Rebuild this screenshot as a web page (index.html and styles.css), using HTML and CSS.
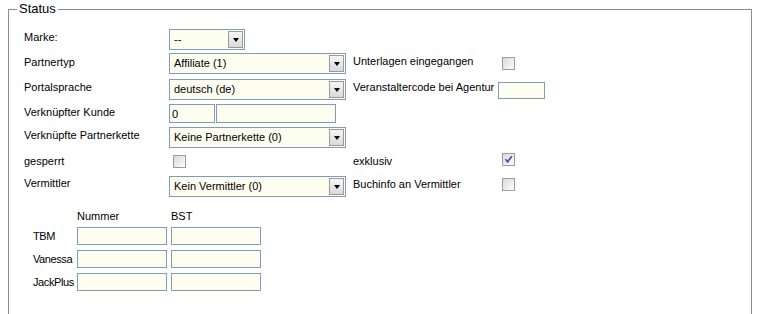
FILE: index.html
```html
<!DOCTYPE html>
<html lang="de">
<head>
<meta charset="utf-8">
<title>Status</title>
<link rel="stylesheet" href="styles.css">
</head>
<body>
<fieldset class="status">
  <legend class="legend">Status</legend>
  <div class="form">
    <!-- row 1 -->
    <div class="lbl">Marke:</div>
    <div class="cell">
      <div class="select select-short"><span class="val">--</span><span class="btn"><span class="arrow"></span></span></div>
    </div>
    <div></div><div></div>
    <!-- row 2 -->
    <div class="lbl pt3">Partnertyp</div>
    <div class="cell">
      <div class="select"><span class="val">Affiliate (1)</span><span class="btn"><span class="arrow"></span></span></div>
    </div>
    <div class="lbl">Unterlagen eingegangen</div>
    <div class="cell"><span class="check mt4"></span></div>
    <!-- row 3 -->
    <div class="lbl">Portalsprache</div>
    <div class="cell">
      <div class="select"><span class="val">deutsch (de)</span><span class="btn"><span class="arrow"></span></span></div>
    </div>
    <div class="lbl">Veranstaltercode bei Agentur</div>
    <div class="cell"><span class="input input-code"></span></div>
    <!-- row 4 -->
    <div class="lbl">Verknüpfter Kunde</div>
    <div class="cell pair">
      <span class="input input-id">0</span><span class="input input-name"></span>
    </div>
    <div></div><div></div>
    <!-- row 5 -->
    <div class="lbl">Verknüpfte Partnerkette</div>
    <div class="cell">
      <div class="select"><span class="val">Keine Partnerkette (0)</span><span class="btn"><span class="arrow"></span></span></div>
    </div>
    <div></div><div></div>
    <!-- row 6 -->
    <div class="lbl pt3">gesperrt</div>
    <div class="cell"><span class="check mt3"></span></div>
    <div class="lbl pt3">exklusiv</div>
    <div class="cell"><span class="check mt1 checked"><svg viewBox="0 0 11 11" width="11" height="11"><path d="M2.5 5.2 L4.6 7.8 L8.8 2.2" fill="none" stroke="#3d55a3" stroke-width="1.7"/></svg></span></div>
    <!-- row 7 -->
    <div class="lbl pt1">Vermittler</div>
    <div class="cell">
      <div class="select"><span class="val">Kein Vermittler (0)</span><span class="btn"><span class="arrow"></span></span></div>
    </div>
    <div class="lbl">Buchinfo an Vermittler</div>
    <div class="cell"><span class="check mt2"></span></div>
  </div>

  <div class="codes">
    <div></div>
    <div class="head">Nummer</div>
    <div class="head">BST</div>

    <div class="clbl">TBM</div>
    <span class="input input-cell"></span>
    <span class="input input-cell"></span>

    <div class="clbl">Vanessa</div>
    <span class="input input-cell"></span>
    <span class="input input-cell"></span>

    <div class="clbl">JackPlus</div>
    <span class="input input-cell"></span>
    <span class="input input-cell"></span>
  </div>
</fieldset>
</body>
</html>
```

FILE: styles.css
```css
html, body {
  margin: 0;
  padding: 0;
  background: #ffffff;
}

body {
  font-family: "Liberation Sans", Arial, sans-serif;
  font-size: 11px;
  line-height: 13px;
  color: #000000;
}

.status {
  margin: 1px 6px 0 8px;
  padding: 0 0 40px 8px;
  border: 1px solid #8c8c8c;
  min-width: 0;
}

.legend {
  padding: 0 2px;
  font-size: 13px;
  line-height: 16px;
  color: #000;
}

.form {
  margin: 12px 0 0 7px;
  display: grid;
  grid-template-columns: 145px 184px 145px auto;
  grid-template-rows: 24px 26px 25px 23px 25px 24px 21px;
  align-items: start;
}

.lbl {
  padding-top: 2px;
  white-space: nowrap;
}
.pt1 { padding-top: 1px; }
.pt3 { padding-top: 3px; }

.cell {
  display: flex;
  align-items: flex-start;
}

.mt1 { margin-top: 1px; }
.mt2 { margin-top: 2px; }
.mt3 { margin-top: 3px; margin-left: 4px; }
.mt4 { margin-top: 4px; }

/* select */
.select {
  box-sizing: border-box;
  width: 177px;
  height: 21px;
  border: 1px solid #7f9db9;
  background: #fefef0;
  display: flex;
  align-items: center;
  justify-content: space-between;
  padding: 0 1px 0 4px;
}
.select-short {
  width: 76px;
}
.select .val {
  white-space: nowrap;
}
.btn {
  box-sizing: border-box;
  width: 15px;
  height: 17px;
  border: 1px solid #9a9a9a;
  background: linear-gradient(#f6f6f6, #dadada);
  display: flex;
  align-items: center;
  justify-content: center;
}
.arrow {
  width: 0;
  height: 0;
  border-left: 3.5px solid transparent;
  border-right: 3.5px solid transparent;
  border-top: 4px solid #000;
}

/* inputs */
.input {
  box-sizing: border-box;
  display: block;
  border: 1px solid #7f9db9;
  background: #fefef0;
  padding: 3px 2px 0;
}
.input-code {
  width: 47px;
  height: 17px;
  margin-top: 3px;
}
.pair {
  gap: 1px;
}
.input-id {
  width: 46px;
  height: 19px;
}
.input-name {
  width: 120px;
  height: 19px;
}

/* checkbox */
.check {
  box-sizing: border-box;
  display: block;
  width: 13px;
  height: 13px;
  border: 1px solid #9c9c9c;
  background: linear-gradient(135deg, #d9d9d9, #f2f2f2 70%, #ffffff);
  margin-left: 4px;
}
.check svg {
  display: block;
}

/* codes table */
.codes {
  margin: 13px 0 0 16px;
  display: grid;
  grid-template-columns: 40px 90px 90px;
  grid-template-rows: 17px 23px 23px 18px;
  column-gap: 4px;
  align-items: start;
}
.head {
  white-space: nowrap;
}
.clbl {
  padding-top: 3px;
  white-space: nowrap;
  letter-spacing: -0.4px;
}
.input-cell {
  width: 90px;
  height: 18px;
}
```
